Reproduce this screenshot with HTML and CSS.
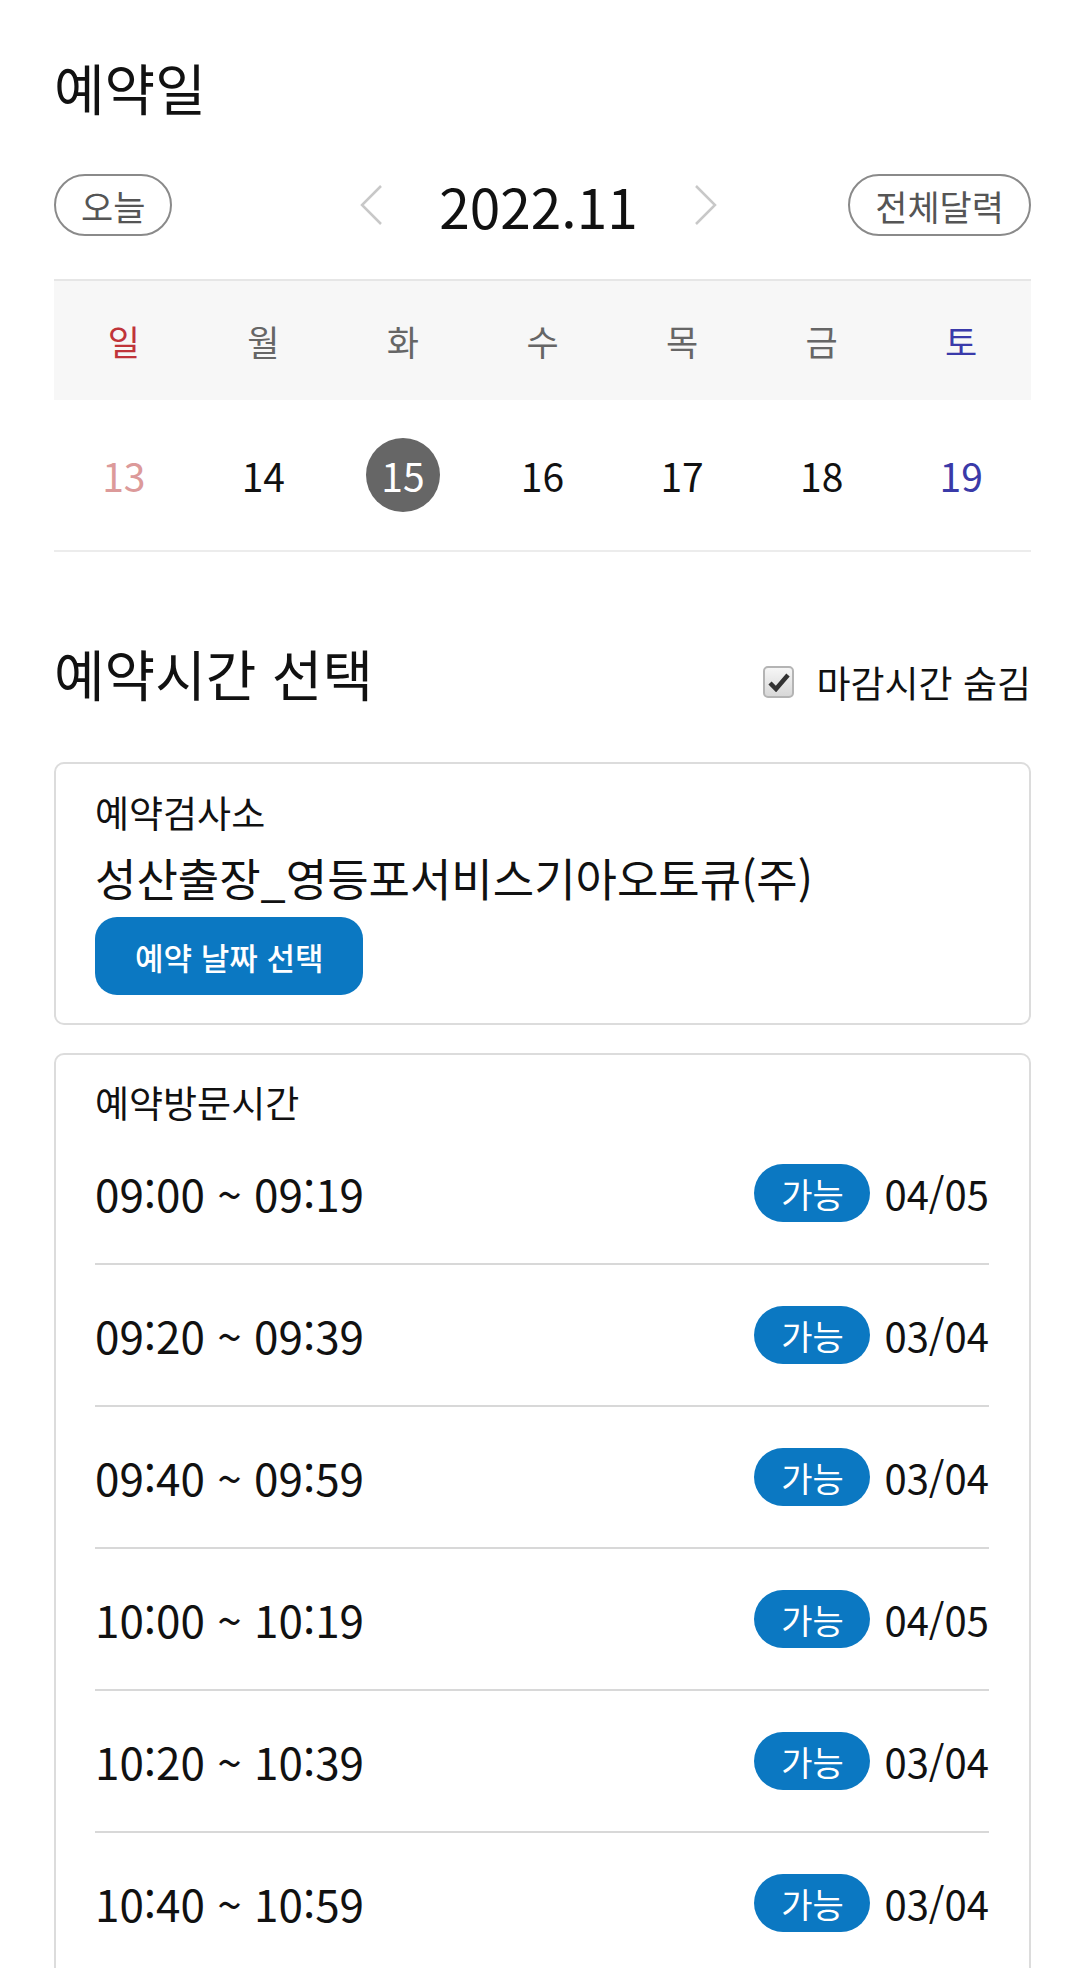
FILE: index.html
```html
<!DOCTYPE html>
<html lang="ko">
<head>
    <meta charset="UTF-8">
    <meta name="viewport" content="width=device-width, initial-scale=1.0">
    <title>예약일</title>
    <link rel="stylesheet" href="styles.css">
</head>
<body>
    <div class="page">
        <h1 class="titulo">예약일</h1>

        <div class="cal-nav">
            <button type="button" class="pill">오늘</button>
            <div class="mes">
                <svg class="seta" width="24" height="42" viewBox="0 0 24 42"><polyline points="22,2 3,21 22,40" /></svg>
                <span class="mes-texto">2022.11</span>
                <svg class="seta" width="24" height="42" viewBox="0 0 24 42"><polyline points="2,2 21,21 2,40" /></svg>
            </div>
            <button type="button" class="pill pill-dir">전체달력</button>
        </div>

        <div class="semana">
            <span class="dom">일</span>
            <span>월</span>
            <span>화</span>
            <span>수</span>
            <span>목</span>
            <span>금</span>
            <span class="sab">토</span>
        </div>
        <div class="dias">
            <span class="dom">13</span>
            <span>14</span>
            <span><em class="hoje">15</em></span>
            <span>16</span>
            <span>17</span>
            <span>18</span>
            <span class="sab">19</span>
        </div>

        <div class="hora-topo">
            <h2 class="titulo">예약시간 선택</h2>
            <label class="check">
                <span class="caixa">
                    <svg width="22" height="20" viewBox="0 0 22 20"><path d="M2 11 L8 17 L20 3" /></svg>
                </span>
                마감시간 숨김
            </label>
        </div>

        <div class="cartao">
            <div class="rotulo">예약검사소</div>
            <div class="nome">성산출장_영등포서비스기아오토큐(주)</div>
            <button type="button" class="azul">예약 날짜 선택</button>
        </div>

        <div class="cartao cartao-lista">
            <div class="rotulo">예약방문시간</div>
            <ul class="horarios">
                <li><span class="faixa">09:00 ~ 09:19</span><span class="estado"><b>가능</b>04/05</span></li>
                <li><span class="faixa">09:20 ~ 09:39</span><span class="estado"><b>가능</b>03/04</span></li>
                <li><span class="faixa">09:40 ~ 09:59</span><span class="estado"><b>가능</b>03/04</span></li>
                <li><span class="faixa">10:00 ~ 10:19</span><span class="estado"><b>가능</b>04/05</span></li>
                <li><span class="faixa">10:20 ~ 10:39</span><span class="estado"><b>가능</b>03/04</span></li>
                <li><span class="faixa">10:40 ~ 10:59</span><span class="estado"><b>가능</b>03/04</span></li>
            </ul>
        </div>
    </div>
</body>
</html>
```

FILE: styles.css
```css
body {
    margin: 0;
    font-family: "Noto Sans CJK KR", "Noto Sans", sans-serif;
    color: #111;
    background-color: #fff;
}
.page {
    padding: 0 49px 0 54px;
}
.titulo {
    margin: 0;
    font-size: 55px;
    line-height: 64px;
    font-weight: 400;
}
h1.titulo {
    padding-top: 54px;
}

/* navegação do mês */
.cal-nav {
    margin-top: 56px;
    display: grid;
    grid-template-columns: 1fr auto 1fr;
    align-items: center;
}
.pill {
    justify-self: start;
    height: 62px;
    padding: 0 25px;
    border: 2px solid #8a8a8a;
    border-radius: 31px;
    background-color: #fff;
    font-family: inherit;
    font-size: 35px;
    color: #555;
    line-height: 1;
}
.pill-dir {
    justify-self: end;
}
.mes {
    display: flex;
    align-items: center;
    gap: 56px;
    margin-right: 8px;
}
.mes-texto {
    font-size: 55px;
    line-height: 62px;
}
.seta polyline {
    fill: none;
    stroke: #c8c8c8;
    stroke-width: 2.5;
}

/* calendário */
.semana, .dias {
    display: grid;
    grid-template-columns: repeat(7, 1fr);
    align-items: center;
    text-align: center;
}
.semana {
    margin-top: 43px;
    height: 121px;
    box-sizing: border-box;
    border-top: 2px solid #e6e6e6;
    background-color: #f7f7f7;
    font-size: 35px;
    color: #666;
}
.semana .dom { color: #c0343a; }
.semana .sab { color: #3a3aaa; }
.dias {
    height: 152px;
    box-sizing: border-box;
    border-bottom: 2px solid #ececec;
    font-size: 39px;
}
.dias .dom { color: #dc9a9a; }
.dias .sab { color: #3a3aa8; }
.hoje {
    display: inline-flex;
    align-items: center;
    justify-content: center;
    width: 74px;
    height: 74px;
    border-radius: 50%;
    background-color: #666;
    color: #fff;
    font-style: normal;
}

/* horário */
.hora-topo {
    margin-top: 88px;
    display: flex;
    justify-content: space-between;
    align-items: flex-end;
}
.check {
    display: flex;
    align-items: center;
    gap: 22px;
    font-size: 37px;
    line-height: 40px;
    padding-bottom: 2px;
}
.caixa {
    display: flex;
    align-items: center;
    justify-content: center;
    width: 31px;
    height: 32px;
    box-sizing: border-box;
    border: 2px solid #b4b4b4;
    border-radius: 5px;
    background: linear-gradient(#f6f6f6, #d8d8d8);
}
.caixa path {
    fill: none;
    stroke: #333;
    stroke-width: 4.5;
}

.cartao {
    margin-top: 58px;
    padding: 26px 40px 28px 39px;
    border: 2px solid #dcdcdc;
    border-radius: 10px;
}
.rotulo {
    font-size: 37px;
    line-height: 44px;
}
.nome {
    margin-top: 18px;
    font-size: 45px;
    line-height: 52px;
}
.azul {
    margin-top: 13px;
    height: 78px;
    padding: 0 40px;
    border: none;
    border-radius: 22px;
    background-color: #0b78c2;
    color: #fff;
    font-family: inherit;
    font-size: 31px;
    font-weight: 500;
}
.cartao-lista {
    margin-top: 28px;
    padding-top: 26px;
}
.cartao-lista .rotulo {
    line-height: 42px;
}
.horarios {
    list-style: none;
    margin: 0;
    padding: 0;
}
.horarios li {
    display: flex;
    justify-content: space-between;
    align-items: center;
    height: 140px;
    border-bottom: 2px solid #d8d8d8;
}
.faixa {
    font-size: 44px;
}
.estado {
    display: flex;
    align-items: center;
    gap: 14px;
    font-size: 40px;
}
.estado b {
    display: inline-flex;
    align-items: center;
    justify-content: center;
    width: 116px;
    height: 58px;
    border-radius: 29px;
    background-color: #0b78c2;
    color: #fff;
    font-size: 34px;
    font-weight: 400;
}
```
